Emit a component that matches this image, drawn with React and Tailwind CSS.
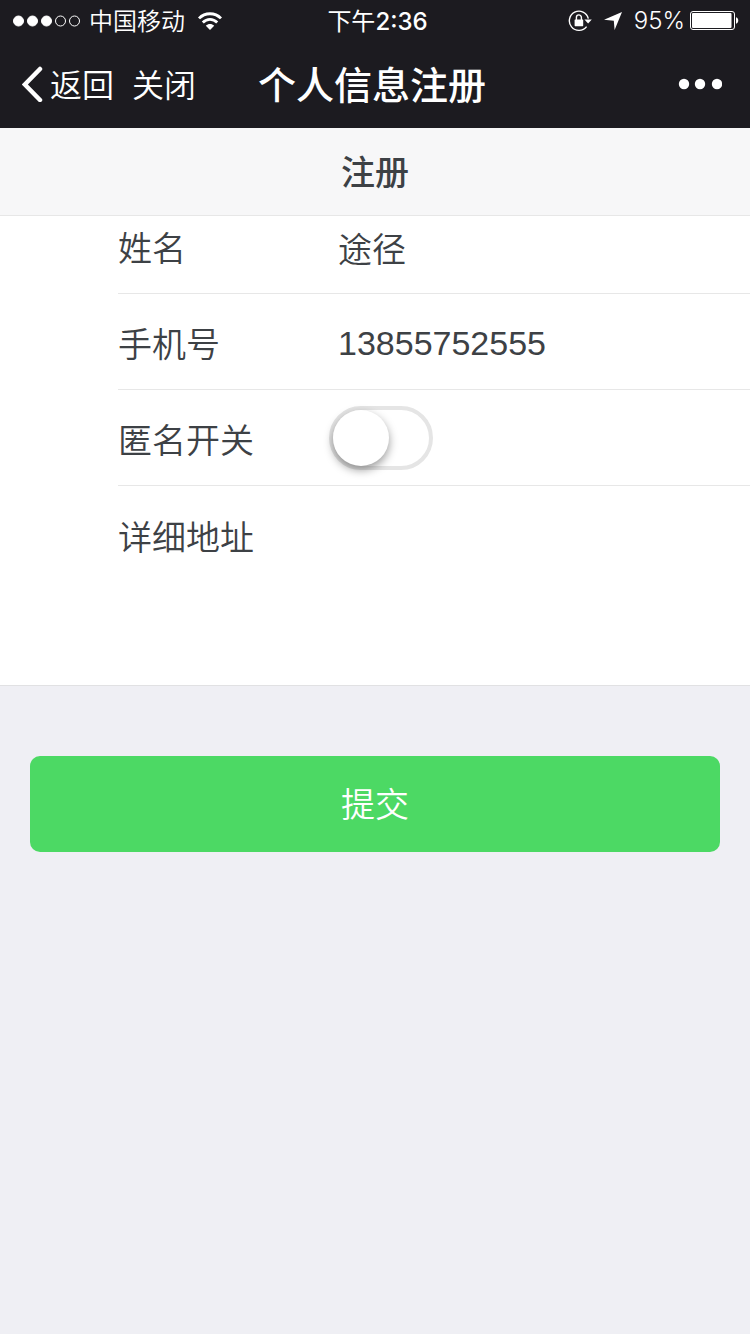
import React from 'react';

function StatusBar() {
  return (
    <div className="grid grid-cols-3 items-center h-10 pt-px pl-3 pr-[11px] text-2xl font-['Inter','Noto_Sans_CJK_SC',sans-serif]">
      <div className="flex items-center">
        <svg className="w-[69px] h-3" viewBox="0 0 69 12" fill="#fff" stroke="#fff">
          <circle cx="6.5" cy="6" r="5" />
          <circle cx="20.5" cy="6" r="5" />
          <circle cx="34.5" cy="6" r="5" />
          <circle cx="48.5" cy="6" r="5" fill="none" />
          <circle cx="62.5" cy="6" r="5" fill="none" />
        </svg>
        <span className="ml-2 pt-0.5 font-[350] whitespace-nowrap">中国移动</span>
        <svg className="ml-3 w-[26px] h-5" viewBox="0 0 26 20" fill="none" stroke="#fff" strokeWidth="2.8">
          <path d="M2 7.4C8 1.2 18 1.2 24 7.4" />
          <path d="M5.8 11.6C10 7.4 16 7.4 20.2 11.6" />
          <path d="M13 19L8.8 14.8C11.2 12.4 14.8 12.4 17.2 14.8Z" fill="#fff" stroke="none" />
        </svg>
      </div>
      <div className="pt-0.5 pl-1 text-center whitespace-nowrap">下午<span className="font-medium">2:36</span></div>
      <div className="flex items-center justify-end">
        <svg className="w-6 h-6" viewBox="0 0 24 24" fill="none" stroke="#fff">
          <path d="M18.6 17.6A9.6 9.6 0 1 1 20.3 9.6" strokeWidth="1.4" />
          <path d="M16.4 10.4h7.4l-3.7 4z" fill="#fff" stroke="none" />
          <rect x="6.6" y="10.4" width="8.6" height="6.8" rx="0.6" fill="#fff" stroke="none" />
          <path d="M8.4 11V8.4a2.5 2.5 0 0 1 5 0V11" strokeWidth="1.4" />
        </svg>
        <svg className="ml-3 w-[18px] h-[18px]" viewBox="0 0 18 18" fill="#fff">
          <path d="M18 0L10.6 18L9.8 8.8L0 7.8Z" />
        </svg>
        <span className="ml-3 font-[350]">95%</span>
        <svg className="ml-1 w-[50px] h-5" viewBox="0 0 50 20" fill="#fff">
          <rect x="1.5" y="0.5" width="44" height="18" rx="2.5" fill="none" stroke="#fff" />
          <rect x="3" y="2" width="39.5" height="15" rx="1" />
          <path d="M47 6.2c3 0.8 3 5.8 0 6.6z" />
        </svg>
      </div>
    </div>
  );
}

function NavBar() {
  return (
    <nav className="flex items-center justify-between h-[88px] pl-[22px] pr-7 text-[32px]">
      <div className="flex flex-1 items-center font-[350]">
        <button type="button" className="flex items-center">
          <svg className="w-[22px] h-9 mr-1.5" viewBox="0 0 22 36" fill="none" stroke="#fff" strokeWidth="4.5" strokeLinecap="round">
            <path d="M18 3L2.8 18.5L18 34" />
          </svg>
          <span className="pt-1">返回</span>
        </button>
        <button type="button" className="ml-[18px] pt-1">关闭</button>
      </div>
      <h1 className="pt-1 text-[38px] leading-[48px] font-medium">个人信息注册</h1>
      <div className="flex flex-1 justify-end">
        <button type="button" aria-label="更多">
          <svg className="w-11 h-11" viewBox="0 0 44 44" fill="#fff">
            <circle cx="6" cy="22" r="5.2" />
            <circle cx="22" cy="22" r="5.2" />
            <circle cx="39" cy="22" r="5.2" />
          </svg>
        </button>
      </div>
    </nav>
  );
}

export default function App() {
  return (
    <div className="min-h-screen bg-[#efeff4] text-[#3d4145] font-['Liberation_Sans','Noto_Sans_CJK_SC',sans-serif]">
      <header className="bg-[#1c1b20] text-white">
        <StatusBar />
        <NavBar />
      </header>
      <h2 className="flex items-center justify-center h-[88px] pt-1 bg-[#f7f7f8] border-b border-[#e7e7e7] text-[34px] font-medium">注册</h2>
      <form onSubmit={(e) => e.preventDefault()} className="text-[34px] leading-[48px] font-[350]">
        <div className="pl-[118px] bg-white border-b border-[#e1e1e3]">
          <div className="flex items-center h-[78px] pb-[18px] border-b border-[#e7e7e7]">
            <label htmlFor="name" className="w-[220px] pt-1.5">姓名</label>
            <input id="name" type="text" defaultValue="途径" className="flex-1 min-w-0 h-[52px] pt-1 outline-none bg-transparent" />
          </div>
          <div className="flex items-center h-24 border-b border-[#e7e7e7]">
            <label htmlFor="phone" className="w-[220px] pt-1.5">手机号</label>
            <input id="phone" type="tel" defaultValue="13855752555" className="flex-1 min-w-0 h-[52px] pt-1 outline-none bg-transparent" />
          </div>
          <div className="flex items-center h-24 border-b border-[#e7e7e7]">
            <label htmlFor="anonymous" className="w-[211px] pt-1.5">匿名开关</label>
            <input
              id="anonymous"
              type="checkbox"
              role="switch"
              className="appearance-none w-[104px] h-16 rounded-full border-4 border-[#e5e5e5] bg-white checked:bg-[#4cd964] before:block before:size-14 before:rounded-full before:bg-white before:shadow-[0_4px_10px_rgba(0,0,0,0.4)] checked:before:ml-10"
            />
          </div>
          <div className="flex h-[199px] pt-[22px]">
            <label htmlFor="address" className="w-[220px] pt-1.5">详细地址</label>
            <textarea id="address" className="flex-1 min-w-0 h-[150px] outline-none resize-none bg-transparent" />
          </div>
        </div>
        <div className="px-[30px] pt-[70px]">
          <button type="submit" className="w-full h-24 pt-0.5 rounded-[10px] bg-[#4cd964] text-white">提交</button>
        </div>
      </form>
    </div>
  );
}
